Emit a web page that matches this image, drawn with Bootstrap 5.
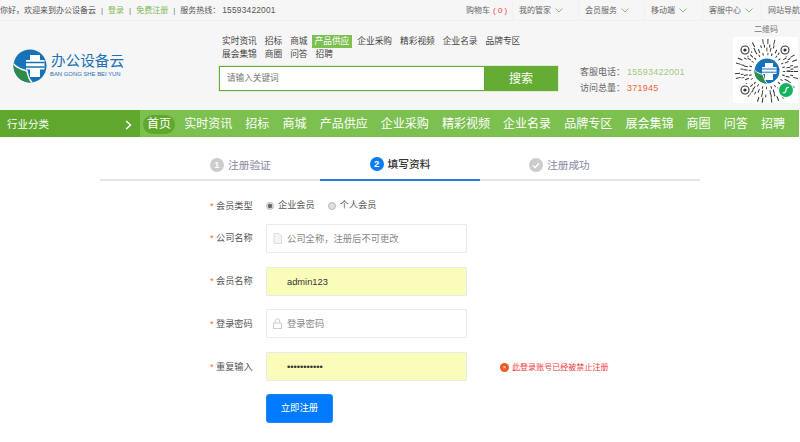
<!DOCTYPE html>
<html lang="zh-CN">
<head>
<meta charset="utf-8">
<title>填写资料</title>
<link href="https://cdn.jsdelivr.net/npm/bootstrap@5.3.0/dist/css/bootstrap.min.css" rel="stylesheet">
<style>
html,body{height:442px;overflow:hidden}
body{background:#fff;color:#555;font-family:"Liberation Sans","Noto Sans CJK SC",sans-serif;font-size:8px;line-height:1.2}
a{text-decoration:none;color:inherit}
.top-strip{height:21px;background:#f6f6f6;border-bottom:1px solid #f0f0f0;white-space:nowrap;overflow:hidden;padding-top:1px}
.top-left{width:466px;flex:none}
.top-left .sep{margin:0 5px;color:#777}
.top-left .grn{color:#7cb955}
.top-left .tel{letter-spacing:.2px;font-size:8.4px;margin-left:2px}
.top-item{display:flex;align-items:center;height:100%;color:#666;border-left:1px solid #f0f0f0;flex:none}
.top-item svg{margin-left:4px}
.ti-cart{width:46px;border-left:0}
.ti-cart b{color:#f33;font-weight:400;margin:0 3px}
.ti-a{width:66px;padding-left:6px}
.ti-b{width:66px;padding-left:6px}
.ti-c{width:58px;padding-left:6px}
.ti-d{width:59px;padding-left:6px}
.ti-e{width:39px;padding-left:6px}
.head-band{height:89px;background:#f6f6f6}
.logo-box{width:218px;flex:none;padding:28px 0 0 13px}
.logo-name{color:#1d72b3;font-size:14.6px;line-height:17px;width:75px;white-space:nowrap}
.logo-pin{color:#1d72b3;font-size:5.9px;line-height:7px;white-space:nowrap;margin-top:1px;margin-left:-1px}
.mid-box{width:342px;flex:none}
.quick{width:312px;padding:14px 0 0 0;height:44px;align-content:flex-start;font-size:8.7px;line-height:13px;color:#444}
.quick a{padding:0 4px}
.quick a.on{background:#7cc04f;color:#fff;padding:0 3px;margin:0 1px 0 0}
.find-bar{height:27px;width:341px;border:1px solid #dfeed5}
.find-in{flex:1;background:#fff;border:1px solid #6aae3a;border-right:0;font-size:8.6px;color:#777;padding-left:7px;display:flex;align-items:center}
.find-btn{width:74px;background:#64ac33;color:#fff;border:0;border-radius:0;font-size:12px;padding:0}
.info-box{width:153px;flex:none;padding:43px 0 0 20px;font-size:9px;line-height:16px;color:#666}
.info-box span{margin-left:2px;letter-spacing:.25px}
.info-box .v1{color:#9fcb80}
.info-box .v2{color:#f2683a}
.qr-box{width:87px;flex:none;padding:3px 0 0 5px}
.qr-title{font-size:8px;line-height:11px;color:#777;margin:0 0 2px 36px;white-space:nowrap}
.qr-pic{display:block;margin-left:15px;background:#fff}
.nav-band{height:27px;background:#7cc04f;margin-right:1px;color:#fff}
.cat-cell{width:140px;flex:none;background:#5fa82d;font-size:10.500px;padding:2px 8px 0 7px}
.nav-links{font-size:12px;gap:13.150px;padding:2px 0 0 3px;white-space:nowrap}
.nav-links a.home{background:#5fa82d;border-radius:10px;padding:2px 4px;margin-right:-4px}
.steps-wrap{width:600px;margin:0 auto;height:44px;border-bottom:2px solid #e4e4e4}
.step-cell{height:44px;margin-bottom:-2px;font-size:10.700px;color:#9a9ab0;gap:4px;padding-top:12px;font-weight:500}
.step-1{width:220px;padding-left:110px}
.step-2{width:160px;justify-content:center;color:#333;border-bottom:2px solid #2a7de1}
.step-3{padding-left:49px;width:220px}
.num{width:14px;height:14px;border-radius:50%;background:#ccc;color:#fff;font-size:9.500px;font-weight:700;display:flex;align-items:center;justify-content:center;font-family:"Liberation Sans",sans-serif;flex:none}
.num.cur{background:#0a7cf5}
.reg-form{padding:0 0 0 210px;font-size:9.200px;color:#555}
.field-row{height:42.750px;display:flex;align-items:center}
.type-row{height:36px;margin-top:7px;margin-bottom:-7px}
.lbl{width:56px;flex:none;padding-top:1px}
.lbl i{font-style:normal;color:#f2683a;display:inline-block;width:6px}
.pick{display:flex;align-items:center;gap:4px;margin-right:13px}
.dot{width:8px;height:8px;border-radius:50%;background:#ddd;border:1px solid #bbb;display:block}
.dot.chk{background:radial-gradient(circle,#666 0 2px,#ddd 2.400px)}
.reg-input{width:201px;height:29px;border:1px solid #eaeaea;border-radius:1px;background:#fff;padding:0 0 0 20px;font-size:9.300px;color:#888;position:relative;line-height:28px}
.reg-input.fill{background:#fafcb9;color:#333}
.reg-input svg{position:absolute;left:6px;top:8px}
.pw{color:#111}
.err{margin-left:33px;padding-top:2px;color:#f2383a;font-size:8.050px;display:flex;align-items:center;gap:3px}
.err-ico{width:9px;height:9px;border-radius:50%;background:#ee5a24;color:#fff;font-size:6px;line-height:9px;text-align:center;display:block}
.go-row{padding-left:56px;margin-top:6px}
.go-btn{width:67px;height:29px;padding:0;border-radius:3px;background:#007bff;border:1px solid #1a88ff;font-size:9.400px;color:#fff}
</style>
</head>
<body>
<div class="top-strip d-flex align-items-center">
  <div class="top-left">你好，欢迎来到办公设备云<span class="sep">|</span><a class="grn" href="#">登录</a><span class="sep">|</span><a class="grn" href="#">免费注册</a><span class="sep">|</span>服务热线：<span class="tel">15593422001</span></div>
  <div class="top-item ti-cart">购物车<b>( 0 )</b></div>
  <div class="top-item ti-a">我的管家<svg width="8" height="5" viewBox="0 0 8 5"><path d="M.5.5 4 4 7.500.5" fill="none" stroke="#8cc068"/></svg></div>
  <div class="top-item ti-b">会员服务<svg width="8" height="5" viewBox="0 0 8 5"><path d="M.5.5 4 4 7.500.5" fill="none" stroke="#8cc068"/></svg></div>
  <div class="top-item ti-c">移动端<svg width="8" height="5" viewBox="0 0 8 5"><path d="M.5.5 4 4 7.500.5" fill="none" stroke="#8cc068"/></svg></div>
  <div class="top-item ti-d">客服中心<svg width="8" height="5" viewBox="0 0 8 5"><path d="M.5.5 4 4 7.500.5" fill="none" stroke="#8cc068"/></svg></div>
  <div class="top-item ti-e">网站导航</div>
</div>

<div class="head-band d-flex">
  <div class="logo-box d-flex gap-1">
    <svg width="34" height="34" viewBox="0 0 34 34">
      <circle cx="17" cy="17" r="16.500" fill="#1673b8"/>
      <path d="M.7 15C5 20 11 21 14 22c1 5 2 9 5 11.400A16.500 16.500 0 0 1 .7 15z" fill="#2e8b4a"/>
      <path d="M.7 15C5 20 11 21 14 22c1 5 2 9 5 11.400" fill="none" stroke="#fff" stroke-width="1.400"/>
      <path d="M17 6h10v5h4.500v9.500H27V28H17v-7.500h-4V11h4z" fill="#fff"/>
      <path d="M13 13.500h18.500M13 18h18.500" stroke="#1673b8" stroke-width="1.300"/>
    </svg>
    <div class="pt-1"><div class="logo-name">办公设备云</div><div class="logo-pin">BAN GONG SHE BEI YUN</div></div>
  </div>
  <div class="mid-box">
    <div class="quick d-flex flex-wrap">
      <a href="#">实时资讯</a><a href="#">招标</a><a href="#">商城</a><a class="on" href="#">产品供应</a><a href="#">企业采购</a><a href="#">精彩视频</a><a href="#">企业名录</a><a href="#">品牌专区</a><a href="#">展会集锦</a><a href="#">商圈</a><a href="#">问答</a><a href="#">招聘</a>
    </div>
    <div class="find-bar d-flex">
      <div class="find-in">请输入关键词</div>
      <button class="btn find-btn" type="button">搜索</button>
    </div>
  </div>
  <div class="info-box">
    <div>客服电话：<span class="v1">15593422001</span></div>
    <div>访问总量：<span class="v2">371945</span></div>
  </div>
  <div class="qr-box">
    <div class="qr-title">二维码</div>
    <svg class="qr-pic" width="65" height="66" viewBox="0 0 65 66">
      <g fill="none" stroke="#333">
        <circle cx="34" cy="34" r="29.500" stroke-width="5" stroke-dasharray="1 5.500 .9 8 1 3.500 1 9 .9 4"/>
        <circle cx="34" cy="34" r="25" stroke-width="3" stroke-dasharray="1 3 1 6 .9 2.500 1 4.500"/>
        <circle cx="34" cy="34" r="21.500" stroke-width="4" stroke-dasharray=".9 4.500 1 2.500 1 7 .9 3"/>
        <circle cx="34" cy="34" r="17" stroke-width="2.500" stroke-dasharray=".9 3 1 4"/>
      </g>
      <g fill="#fff"><circle cx="12" cy="13" r="6.500"/><circle cx="52" cy="13" r="6.500"/><circle cx="12" cy="53" r="6.500"/><circle cx="53" cy="53" r="8"/></g>
      <g fill="none" stroke="#333" stroke-width="1.100"><circle cx="12" cy="13" r="4"/><circle cx="52" cy="13" r="4"/><circle cx="12" cy="53" r="4"/></g>
      <g fill="#333"><circle cx="12" cy="13" r="1.600"/><circle cx="52" cy="13" r="1.600"/><circle cx="12" cy="53" r="1.600"/></g>
      <circle cx="34" cy="34" r="12.500" fill="#1673b8"/>
      <path d="M21.500 33C24 36 28 37 30 37.500c1 4 2 7 4.500 9A12.500 12.500 0 0 1 21.500 33z" fill="#2e8b4a"/>
      <path d="M21.500 33C24 36 28 37 30 37.500c1 4 2 7 4.500 9" fill="none" stroke="#fff"/>
      <path d="M32 26h8v4h3.500v7H40v6h-8v-6h-3v-7h3z" fill="#fff"/>
      <path d="M29 32h14.500M29 35.200h14.500" stroke="#1673b8"/>
      <circle cx="53" cy="53" r="7" fill="#15b360"/>
      <path d="M50 55.500c2 1 3-1 3-2.500s1-3 3-2.500" fill="none" stroke="#fff" stroke-width="1.200"/>
    </svg>
  </div>
</div>

<div class="nav-band d-flex align-items-stretch">
  <div class="cat-cell d-flex align-items-center justify-content-between"><span>行业分类</span>
    <svg width="7" height="10" viewBox="0 0 7 10"><path d="M1.200 1 5.500 5 1.200 9" fill="none" stroke="#fff" stroke-width="1.500"/></svg>
  </div>
  <div class="nav-links d-flex align-items-center">
    <a class="home" href="#">首页</a><a href="#">实时资讯</a><a href="#">招标</a><a href="#">商城</a><a href="#">产品供应</a><a href="#">企业采购</a><a href="#">精彩视频</a><a href="#">企业名录</a><a href="#">品牌专区</a><a href="#">展会集锦</a><a href="#">商圈</a><a href="#">问答</a><a href="#">招聘</a>
  </div>
</div>

<div class="steps-wrap d-flex">
  <div class="step-cell step-1 d-flex align-items-center"><span class="num">1</span>注册验证</div>
  <div class="step-cell step-2 d-flex align-items-center"><span class="num cur">2</span>填写资料</div>
  <div class="step-cell step-3 d-flex align-items-center"><span class="num"><svg width="8" height="7" viewBox="0 0 8 7"><path d="M1 3.500 3.200 5.500 7 1.200" fill="none" stroke="#fff" stroke-width="1.300"/></svg></span>注册成功</div>
</div>

<form class="reg-form">
  <div class="field-row type-row">
    <div class="lbl"><i>*</i>会员类型</div>
    <label class="pick"><span class="dot chk"></span>企业会员</label>
    <label class="pick"><span class="dot"></span>个人会员</label>
  </div>
  <div class="field-row">
    <div class="lbl"><i>*</i>公司名称</div>
    <div class="reg-input"><svg width="9" height="11" viewBox="0 0 9 11"><path d="M1 .5h5L8.500 3v7.500H1z" fill="#f4f4f4" stroke="#ddd"/></svg>公司全称，注册后不可更改</div>
  </div>
  <div class="field-row">
    <div class="lbl"><i>*</i>会员名称</div>
    <div class="reg-input fill">admin123</div>
  </div>
  <div class="field-row">
    <div class="lbl"><i>*</i>登录密码</div>
    <div class="reg-input"><svg width="9" height="11" viewBox="0 0 9 11"><path d="M.5 5h8v5.500h-8zM2.300 5V3a2.200 2.200 0 0 1 4.400 0v2" fill="none" stroke="#ccc"/></svg>登录密码</div>
  </div>
  <div class="field-row">
    <div class="lbl"><i>*</i>重复输入</div>
    <div class="reg-input fill pw">•••••••••••</div>
    <div class="err"><span class="err-ico">×</span>此登录账号已经被禁止注册</div>
  </div>
  <div class="go-row"><button class="btn btn-primary go-btn" type="button">立即注册</button></div>
</form>
<script src="https://cdn.jsdelivr.net/npm/bootstrap@5.3.0/dist/js/bootstrap.bundle.min.js"></script>
</body>
</html>
